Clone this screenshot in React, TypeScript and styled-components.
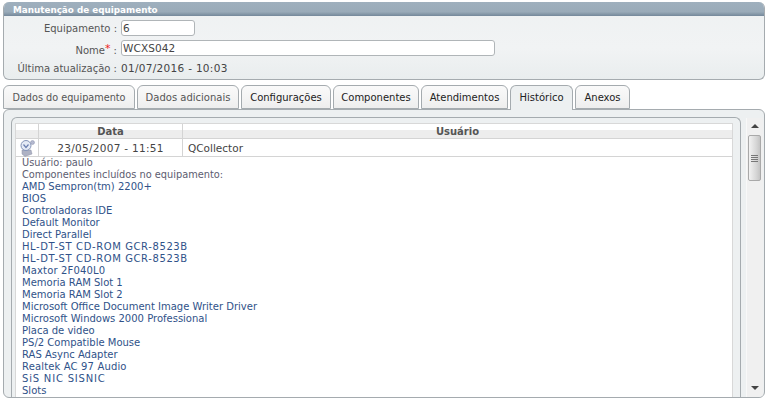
import React from "react";
import styled, { createGlobalStyle } from "styled-components";

const Global = createGlobalStyle`
  html, body { margin: 0; padding: 0; background: #fff; }
  body { width: 768px; height: 402px; overflow: hidden; font-family: "DejaVu Sans", Verdana, sans-serif; font-size: 10px; color: #444; }
`;
const Page = styled.div`
  height: 402px; box-sizing: border-box; padding: 2px 3px 0 3px; display: flex; flex-direction: column; overflow: hidden;
`;
const Panel = styled.section`
  height: 78px; box-sizing: border-box; flex: none; border: 1px solid #a5abaf; border-top: 0; border-radius: 6px;
  background: linear-gradient(to bottom, #eef1f2, #f1f3f4 60%, #e9edee); overflow: hidden;
`;
const PanelTitle = styled.h1`
  height: 14px; margin: 0 -1px; padding-left: 10px; font-size: 8.8px; line-height: 16px; font-weight: bold; color: #fff;
  background: linear-gradient(to bottom, #9fb0be 0, #9aabb9 70%, #74889a 100%);
`;
const FormGrid = styled.div`
  display: grid; grid-template-columns: 117px 1fr; grid-auto-rows: 20px; padding-top: 2px;
`;
const Label = styled.div`
  line-height: 22px; text-align: right; padding-right: 4px; white-space: nowrap; font-size: 10px; color: #555;
`;
const Star = styled.span`color: #e22; font-size: 11px; vertical-align: 2px;`;
const FieldCell = styled.div`display: flex; align-items: center; font-size: 10.5px; letter-spacing: 0.3px; color: #444;`;
const Input = styled.input<{ $w: number }>`
  width: ${p => p.$w}px; height: 16px; box-sizing: border-box; border: 1px solid #b0b5b8; border-radius: 3px; padding: 0 1px;
  font: 10.5px "DejaVu Sans", sans-serif; letter-spacing: 0.1px; color: #444; background: #fff; outline: none;
`;
const TabBar = styled.nav`
  flex: none; display: flex; gap: 2px; margin-top: 5px; height: 25px; position: relative; z-index: 1;
`;
const Tab = styled.div<{ $active?: boolean; $w: number; $muted?: boolean; $size: number }>`
  width: ${p => p.$w}px; height: ${p => (p.$active ? 25 : 24)}px; box-sizing: border-box; border: 1px solid #a5abaf;
  border-bottom: ${p => (p.$active ? "0" : "1px solid #a5abaf")};
  border-radius: 6px 6px 0 0; text-align: center; line-height: 23px; font-size: ${p => p.$size}px; white-space: nowrap;
  color: ${p => (p.$muted ? "#555" : "#222")};
  background: ${p => (p.$active ? "#edf0f1" : "linear-gradient(to bottom, #fafafa, #eeeeee)")};
`;
const Content = styled.section`
  flex: none; height: 289px; margin-top: -1px; box-sizing: border-box; border: 1px solid #a5abaf; border-radius: 6px;
  background: #edf0f1; padding: 7px 1px 0 7px; display: flex; gap: 5px; overflow: hidden;
`;
const Inner = styled.div`
  width: 730px; height: 280px; box-sizing: border-box; border: 1px solid #a5abaf; border-bottom: 0; border-radius: 6px 6px 0 0; padding: 5px 7px 0 3px; background: #edf0f1;
`;
const Table = styled.div`background: #fff; border: 1px solid #d8d8d8; border-bottom: 0; height: 274px; box-sizing: border-box; overflow: hidden;`;
const HeadRow = styled.div`
  display: grid; grid-template-columns: 23px 144px 1fr; height: 14px;
  background: linear-gradient(to bottom, #fff 0, #fff 40%, #ededed 40%, #ededed 100%); border-bottom: 1px solid #d4d4d4;
`;
const HeadCell = styled.div`
  text-align: center; font-weight: bold; font-size: 10px; line-height: 15px; color: #555; border-right: 1px solid #d4d4d4; &:last-child { border-right: 0; }
`;
const DataRow = styled.div`
  display: grid; grid-template-columns: 23px 144px 1fr; height: 17px; border-bottom: 1px solid #d4d4d4;
`;
const DataCell = styled.div<{ $center?: boolean }>`
  border-right: 1px solid #d4d4d4; font-size: 10.5px; letter-spacing: 0.3px; line-height: 17px; color: #444; display: flex; align-items: center;
  justify-content: ${p => (p.$center ? "center" : "flex-start")}; padding-left: ${p => (p.$center ? 0 : "5px")};
  &:last-child { border-right: 0; letter-spacing: 0; }
`;
const Details = styled.div`padding: 0 0 0 6px;`;
const Line = styled.div<{ $plain?: boolean; $spacing?: number }>`
  height: 12px; line-height: 12px; font-size: ${p => (p.$plain ? 9.8 : 10)}px; letter-spacing: ${p => p.$spacing ?? 0}px;
  white-space: nowrap; color: ${p => (p.$plain ? "#5c5c70" : "#2f5289")};
`;
const Scrollbar = styled.div`
  width: 16px; height: 279px; margin-top: 1px; background: #f0f0f0; border-left: 1px solid #f8f8f8; position: relative;
`;
const Arrow = styled.div<{ $down?: boolean }>`
  position: absolute; ${p => (p.$down ? "bottom: 7px" : "top: 6px")}; left: 4px; width: 0; height: 0;
  border-left: 4px solid transparent; border-right: 4px solid transparent;
  ${p => (p.$down ? "border-top: 4px solid #444" : "border-bottom: 4px solid #444")};
`;
const Thumb = styled.div`
  position: absolute; top: 17px; left: 1px; width: 13px; height: 46px; box-sizing: border-box; border: 1px solid #a9a9a9; border-radius: 2px;
  background: linear-gradient(to right, #f2f2f2, #d4d4d4 70%, #c4c4c4); display: flex; flex-direction: column; align-items: center; justify-content: center; gap: 1px;
`;
const Grip = styled.div`width: 7px; height: 1px; background: #777;`;

const Icon = () => (
  <svg width="18" height="18" viewBox="0 0 18 18">
    <path d="M4 11 L13 11 L14 15 L7 17.5 L4 15 Z" fill="#aeb2c4" stroke="#8f93a8" strokeWidth="0.5" />
    <circle cx="8" cy="6.5" r="5" fill="#e4eaf5" stroke="#8494b8" strokeWidth="1" />
    <path d="M5.5 5.5 L8 8.5 L10.5 5.5" fill="none" stroke="#6b7fb0" strokeWidth="1.2" />
    <circle cx="14.5" cy="3.5" r="2" fill="#b4b9cf" stroke="#8a90ad" strokeWidth="0.5" />
  </svg>
);

const items: { text: string; spacing?: number }[] = [
  { text: "AMD Sempron(tm) 2200+" }, { text: "BIOS" }, { text: "Controladoras IDE" }, { text: "Default Monitor" }, { text: "Direct Parallel" },
  { text: "HL-DT-ST CD-ROM GCR-8523B", spacing: 0.6 }, { text: "HL-DT-ST CD-ROM GCR-8523B", spacing: 0.6 },
  { text: "Maxtor 2F040L0", spacing: 0.15 }, { text: "Memoria RAM Slot 1" },
  { text: "Memoria RAM Slot 2" }, { text: "Microsoft Office Document Image Writer Driver" }, { text: "Microsoft Windows 2000 Professional" },
  { text: "Placa de video" }, { text: "PS/2 Compatible Mouse" }, { text: "RAS Async Adapter" },
  { text: "Realtek AC 97 Audio", spacing: 0.15 }, { text: "SiS NIC SISNIC", spacing: 0.8 }, { text: "Slots" },
];
const tabs = [
  { t: "Dados do equipamento", w: 132, muted: true, size: 9.7 },
  { t: "Dados adicionais", w: 102, muted: true, size: 10 },
  { t: "Configurações", w: 90, size: 10 },
  { t: "Componentes", w: 86, size: 10 },
  { t: "Atendimentos", w: 87, size: 10 },
  { t: "Histórico", w: 63, active: true, size: 10 },
  { t: "Anexos", w: 55, size: 10 },
];

export default function App() {
  return (
    <>
      <Global />
      <Page>
        <Panel>
          <PanelTitle>Manutenção de equipamento</PanelTitle>
          <FormGrid>
            <Label>Equipamento :</Label>
            <FieldCell><Input $w={74} defaultValue="6" /></FieldCell>
            <Label>Nome<Star>*</Star> :</Label>
            <FieldCell><Input $w={374} defaultValue="WCXS042" /></FieldCell>
            <Label>Última atualização :</Label>
            <FieldCell>01/07/2016 - 10:03</FieldCell>
          </FormGrid>
        </Panel>
        <TabBar>
          {tabs.map(t => (
            <Tab key={t.t} $w={t.w} $active={t.active} $muted={t.muted} $size={t.size}>{t.t}</Tab>
          ))}
        </TabBar>
        <Content>
          <Inner>
            <Table>
              <HeadRow>
                <HeadCell />
                <HeadCell>Data</HeadCell>
                <HeadCell>Usuário</HeadCell>
              </HeadRow>
              <DataRow>
                <DataCell $center><Icon /></DataCell>
                <DataCell $center>23/05/2007 - 11:51</DataCell>
                <DataCell>QCollector</DataCell>
              </DataRow>
              <Details>
                <Line $plain>Usuário: paulo</Line>
                <Line $plain>Componentes incluídos no equipamento:</Line>
                {items.map((s, i) => <Line key={i} $spacing={s.spacing}>{s.text}</Line>)}
              </Details>
            </Table>
          </Inner>
          <Scrollbar>
            <Arrow />
            <Thumb><Grip /><Grip /><Grip /><Grip /></Thumb>
            <Arrow $down />
          </Scrollbar>
        </Content>
      </Page>
    </>
  );
}
